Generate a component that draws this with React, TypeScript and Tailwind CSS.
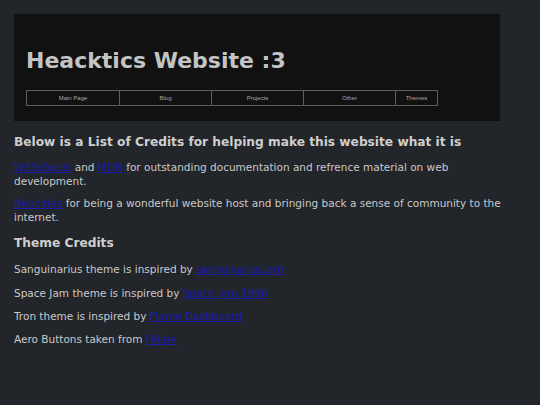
const navItems = [
    { label: "Main Page", w: "w-[94px]" },
    { label: "Blog", w: "w-[93px]" },
    { label: "Projects", w: "w-[93px]" },
    { label: "Other", w: "w-[93px]" },
    { label: "Themes", w: "w-[43px]" },
];

function Link({ children }: { children: React.ReactNode }) {
    return <a href="#" className="text-[#1c1cb0] underline">{children}</a>;
}

export default function App() {
    return (
        <div className="min-h-[405px] bg-[#222529] text-[#c9c9c9] font-['DejaVu_Sans',sans-serif] pt-[14px] pb-4">
            <header className="ml-[14px] w-[486px] h-[107px] bg-[#111111] pl-3 pt-[34px]">
                <h1 className="text-[22px] leading-[26px] font-bold text-[#c4c4c4]">Heacktics Website :3</h1>
                <nav className="flex mt-[16px]">
                    {navItems.map((item, i) => (
                        <div
                            key={item.label}
                            className={`${item.w} h-[16px] flex items-center justify-center border border-[#5e5e5e] ${i > 0 ? "-ml-px" : ""} font-['Liberation_Sans',sans-serif] text-[6px] text-[#a8a8a8]`}
                        >
                            {item.label}
                        </div>
                    ))}
                </nav>
            </header>

            <main className="pl-[14px] pr-[24px]">
                <h2 className="mt-3 text-[12.2px] leading-[18px] font-bold text-[#cfcfcf]">
                    Below is a List of Credits for helping make this website what it is
                </h2>
                <p className="mt-[9px] text-[10.5px] leading-[14px]">
                    <Link>W3Schools</Link> and <Link>MDN</Link> for outstanding documentation and refrence material on web development.
                </p>
                <p className="mt-2 text-[10.5px] leading-[14px]">
                    <Link>Neocities</Link> for being a wonderful website host and bringing back a sense of community to the internet.
                </p>
                <h2 className="mt-[10px] text-[12.2px] leading-[18px] font-bold text-[#cfcfcf]">Theme Credits</h2>
                <p className="mt-[10px] text-[10.5px] leading-[14px]">
                    Sanguinarius theme is inspired by <Link>sanguinarius.org</Link>
                </p>
                <p className="mt-[10px] text-[10.5px] leading-[14px]">
                    Space Jam theme is inspired by <Link>Space Jam 1996</Link>
                </p>
                <p className="mt-[9px] text-[10.5px] leading-[14px]">
                    Tron theme is inspired by <Link>Flame Dashboard</Link>
                </p>
                <p className="mt-[9px] text-[10.5px] leading-[14px]">
                    Aero Buttons taken from <Link>Felipe</Link>
                </p>
            </main>
        </div>
    );
}
